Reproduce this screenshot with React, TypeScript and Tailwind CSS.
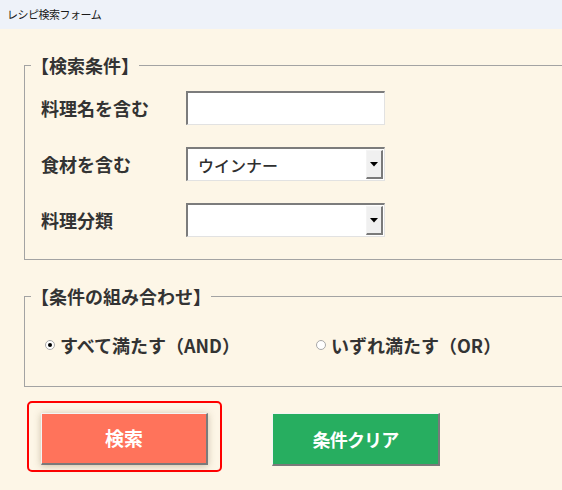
import { useState } from 'react'

const FONT = "font-['Noto_Sans_CJK_JP','Noto_Sans',sans-serif]"

// Classic raised 3D button edges
const RAISED = 'border-t border-l border-t-[#f4f4f4] border-l-[#f4f4f4] border-b-2 border-r-2 border-b-[#7a7a7a] border-r-[#7a7a7a]'
// Sunken field edges
const SUNKEN = 'border-t-2 border-l-2 border-t-[#7c7c7c] border-l-[#7c7c7c] border-b border-r border-b-[#e2e2e2] border-r-[#e2e2e2]'

function ComboBox({ value }: { value: string }) {
  return (
    <div className={`flex h-[34px] w-[199px] items-stretch bg-white ${SUNKEN}`}>
      <div className="flex flex-1 items-center pl-[10px] text-[16px] font-medium text-[#2f2f2f]">{value}</div>
      <div className={`my-px mr-px flex w-[17px] items-center justify-center bg-[#f0f0f0] ${RAISED}`}>
        <svg width="8" height="5" viewBox="0 0 8 5">
          <path d="M0 0h8L4 4.5z" fill="#000" />
        </svg>
      </div>
    </div>
  )
}

function Radio({ checked, label, onClick }: { checked: boolean; label: string; onClick: () => void }) {
  return (
    <button type="button" onClick={onClick} className="flex items-center gap-[5px]">
      <span className="flex h-[10px] w-[10px] items-center justify-center rounded-full border border-[#a8a8a8] bg-white">
        {checked && <span className="h-[4px] w-[4px] rounded-full bg-black" />}
      </span>
      <span className="text-[18px] font-bold leading-[24px] text-[#333]">{label}</span>
    </button>
  )
}

export default function App() {
  const [mode, setMode] = useState<'and' | 'or'>('and')
  const [name, setName] = useState('')

  return (
    <div className={`h-[490px] w-[562px] overflow-hidden bg-[#fdf6e7] ${FONT}`}>
      {/* Title bar */}
      <div className="flex h-[29px] items-center bg-[#eef2f9] pl-[7px] text-[11px] tracking-[-0.5px] text-[#1a1a1a]">
        レシピ検索フォーム
      </div>

      <div className="pl-[24px]">
        {/* 検索条件 */}
        <fieldset className="mt-[26px] w-[580px] border border-[#a3a3a3] pb-[22px] pl-[16px] pt-[16px]">
          <legend className="ml-[-10px] text-[18px] font-bold leading-[20px] text-[#333]">【検索条件】</legend>
          <div className="flex flex-col gap-[22px]">
            <div className="flex items-center">
              <span className="w-[145px] text-[18px] font-bold text-[#333]">料理名を含む</span>
              <input
                value={name}
                onChange={(e) => setName(e.target.value)}
                className={`h-[34px] w-[199px] bg-white px-2 text-[16px] outline-none ${SUNKEN}`}
              />
            </div>
            <div className="flex items-center">
              <span className="w-[145px] text-[18px] font-bold text-[#333]">食材を含む</span>
              <ComboBox value="ウインナー" />
            </div>
            <div className="flex items-center">
              <span className="w-[145px] text-[18px] font-bold text-[#333]">料理分類</span>
              <ComboBox value="" />
            </div>
          </div>
        </fieldset>

        {/* 条件の組み合わせ */}
        <fieldset className="mt-[26px] w-[580px] border border-[#a3a3a3] pb-[29px] pl-[20px] pt-[27px]">
          <legend className="ml-[-14px] text-[18px] font-bold leading-[20px] text-[#333]">【条件の組み合わせ】</legend>
          <div className="flex items-center">
            <div className="w-[271px]">
              <Radio checked={mode === 'and'} label="すべて満たす（AND）" onClick={() => setMode('and')} />
            </div>
            <Radio checked={mode === 'or'} label="いずれ満たす（OR）" onClick={() => setMode('or')} />
          </div>
        </fieldset>

        {/* Buttons */}
        <div className="mt-[14px] flex items-start">
          <div className="ml-[3px] rounded-[5px] border-2 border-[#ff0000] pb-[5px] pl-[12px] pr-[12px] pt-[10px]">
            <button
              type="button"
              className={`flex h-[52px] w-[167px] items-center justify-center bg-[#ff735b] text-[19px] font-bold text-white shadow-[0_1px_7px_rgba(110,90,50,0.35)] ${RAISED}`}
            >
              検索
            </button>
          </div>
          <button
            type="button"
            className={`ml-[50px] mt-[12px] flex h-[53px] w-[168px] items-center justify-center bg-[#27ae60] text-[18px] font-bold tracking-[-0.8px] text-white ${RAISED}`}
          >
            条件クリア
          </button>
        </div>
      </div>
    </div>
  )
}
